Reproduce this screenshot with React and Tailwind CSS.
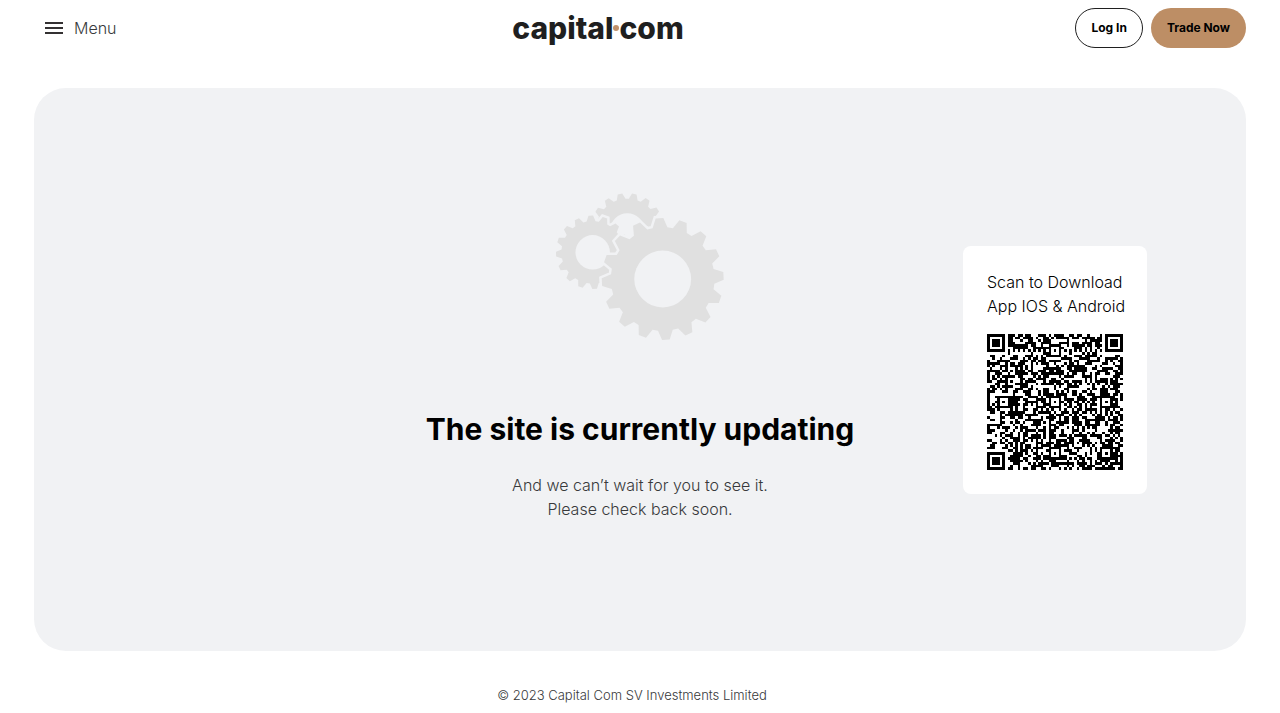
const TEETH = 16;

function gearPath(cx, cy, outer, startDeg) {
  const root = outer * 0.85;
  const step = 360 / TEETH;
  const points = [];
  for (let i = 0; i < TEETH; i++) {
    const mid = startDeg + i * step;
    [[root, -8.2], [outer, -3.6], [outer, 3.6], [root, 8.2]].forEach(([r, offset]) => {
      const a = ((mid + offset) * Math.PI) / 180;
      points.push(`${(cx + r * Math.sin(a)).toFixed(2)} ${(cy - r * Math.cos(a)).toFixed(2)}`);
    });
  }
  return `M${points.join("L")}Z`;
}

function Gear({ cx, cy, outer, hole, start }) {
  return (
    <g>
      <path d={gearPath(cx, cy, outer, start)} fill="#e0e0e0" stroke="#f1f2f4" strokeWidth="5" paintOrder="stroke" />
      <circle cx={cx} cy={cy} r={hole} fill="#f1f2f4" />
    </g>
  );
}

function Gears() {
  return (
    <svg className="h-[148px] w-[168px]" viewBox="0 0 168 148" aria-hidden="true">
      <Gear cx={71.3} cy={37} outer={36.8} hole={16.8} start={11} />
      <Gear cx={36.7} cy={59.3} outer={36.8} hole={17.2} start={-3} />
      <Gear cx={106.7} cy={86} outer={61} hole={28.4} start={-3} />
    </svg>
  );
}

const QR_SIZE = 53;
const ALIGN = [6, 26, 46];

function qrModule(x, y) {
  const last = QR_SIZE - 1;
  const corners = [[3, 3], [last - 3, 3], [3, last - 3]];
  for (const [cx, cy] of corners) {
    const d = Math.max(Math.abs(x - cx), Math.abs(y - cy));
    if (d <= 4) return d !== 2 && d !== 4;
  }
  for (const cx of ALIGN) {
    for (const cy of ALIGN) {
      const inCorner = (cx === 6 && cy !== 26) || (cx === 46 && cy === 6);
      const d = Math.max(Math.abs(x - cx), Math.abs(y - cy));
      if (!inCorner && d <= 2) return d !== 1;
    }
  }
  if (x === 6 || y === 6) return (x + y) % 2 === 0;
  let h = Math.imul(x + 11, 374761393) ^ Math.imul(y + 7, 668265263);
  h = Math.imul(h ^ (h >>> 13), 1274126177);
  return ((h ^ (h >>> 16)) & 255) < 136;
}

function qrPath() {
  let d = "";
  for (let y = 0; y < QR_SIZE; y++) {
    for (let x = 0; x < QR_SIZE; x++) {
      if (qrModule(x, y)) d += `M${x} ${y}h1v1h-1z`;
    }
  }
  return d;
}

function QrCode() {
  return (
    <svg className="size-[136px]" viewBox="0 0 53 53" shapeRendering="crispEdges" role="img" aria-label="QR code">
      <path d={qrPath()} fill="#000" />
    </svg>
  );
}

function Logo() {
  return (
    <a href="#" className="flex h-14 items-center font-['Inter'] text-[30px] leading-10 font-extrabold text-[#1f1f1f]">
      capital
      <span className="size-[6px] rounded-full bg-[#c1916a]" />
      com
    </a>
  );
}

export default function App() {
  return (
    <div className="flex min-h-screen flex-col bg-white font-['Inter',sans-serif] text-base font-light text-[#38393b]">
      <header className="flex h-14 items-center justify-between px-[34px]">
        <button type="button" className="flex h-10 items-center gap-[11px] pr-1 pl-[11px]">
          <svg className="h-3 w-[18px]" viewBox="0 0 18 12" fill="#343132" aria-hidden="true">
            <path d="M0 0h18v2H0zM0 5h18v2H0zM0 10h18v2H0z" />
          </svg>
          Menu
        </button>
        <Logo />
        <div className="flex gap-2 text-xs font-bold text-black">
          <button type="button" className="h-10 rounded-full border border-[#1f1f1f] px-[15px]">Log In</button>
          <button type="button" className="h-10 rounded-full bg-[#bd8e65] px-4">Trade Now</button>
        </div>
      </header>
      <main className="mx-[34px] mt-8 grid flex-1 grid-cols-[1fr_auto_1fr] items-center rounded-[32px] bg-[#f1f2f4]">
        <div className="col-start-2 flex flex-col items-center pb-[26px] text-center">
          <Gears />
          <h1 className="mt-16 text-[30px] leading-12 font-bold text-black">The site is currently updating</h1>
          <p className="mt-5 leading-6">
            And we can’t wait for you to see it.
            <br />
            Please check back soon.
          </p>
        </div>
        <aside className="mr-[99px] w-[184px] justify-self-end rounded-lg bg-white p-6 text-black">
          <p className="mb-4 leading-6 whitespace-nowrap">
            Scan to Download
            <br />
            App IOS &amp; Android
          </p>
          <QrCode />
        </aside>
      </main>
      <footer className="pt-8 pr-4 pb-[6px] text-center text-[13px] leading-6">
        © 2023 Capital Com SV Investments Limited
      </footer>
    </div>
  );
}
